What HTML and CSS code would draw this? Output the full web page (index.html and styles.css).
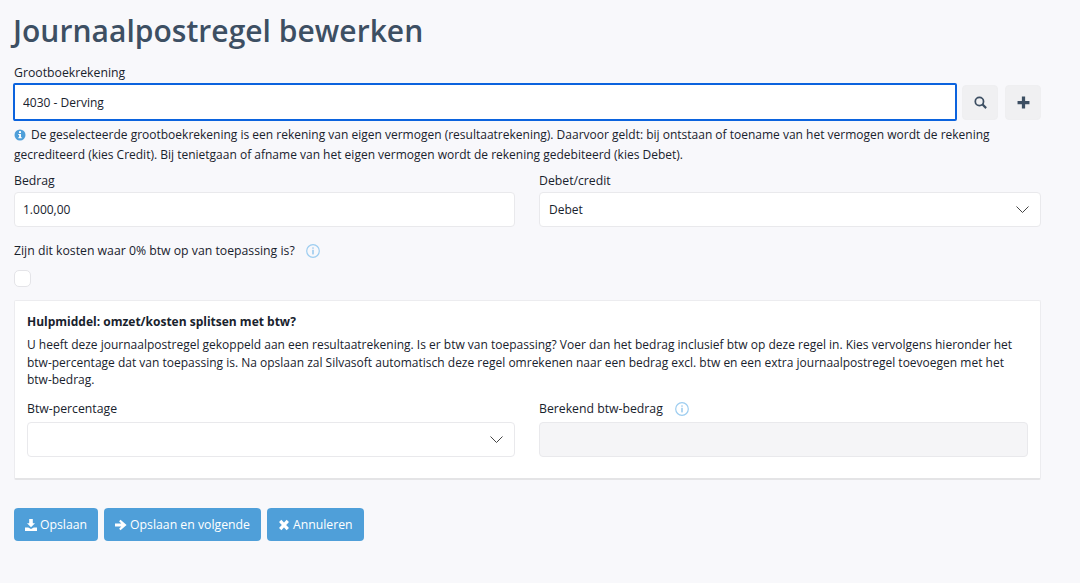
FILE: index.html
```html
<!DOCTYPE html>
<html lang="nl">
<head>
<meta charset="utf-8">
<title>Journaalpostregel bewerken</title>
<link rel="stylesheet" href="styles.css">
</head>
<body>
<main class="page">
  <h1 class="title">Journaalpostregel bewerken</h1>

  <label class="label label-account">Grootboekrekening</label>
  <div class="account-row">
    <input class="control control-focus" type="text" value="4030 - Derving">
    <button class="icon-btn" type="button" aria-label="Zoeken">
      <svg width="13" height="13" viewBox="0 0 12 12"><circle cx="5" cy="5" r="3.8" fill="none" stroke="#3d4f63" stroke-width="1.6"/><path d="M7.7 7.7 11.2 11.2" stroke="#3d4f63" stroke-width="2" fill="none"/></svg>
    </button>
    <button class="icon-btn" type="button" aria-label="Toevoegen">
      <svg width="13" height="13" viewBox="0 0 12 12"><path d="M6 .5v11M.5 6h11" stroke="#3d4f63" stroke-width="3" fill="none"/></svg>
    </button>
  </div>
  <p class="help">
    <svg class="help-icon" width="12" height="12" viewBox="0 0 12 12"><circle cx="6" cy="6" r="5.5" fill="#4f9fd9"/><rect x="5" y="2.2" width="2" height="1.8" fill="#fff"/><path d="M4.3 5h2.7v3.3h.8v1H4.3v-1h.8V6h-.8z" fill="#fff"/></svg>De geselecteerde grootboekrekening is een rekening van eigen vermogen (resultaatrekening). Daarvoor geldt: bij ontstaan of toename van het vermogen wordt de rekening gecrediteerd (kies Credit). Bij tenietgaan of afname van het eigen vermogen wordt de rekening gedebiteerd (kies Debet).
  </p>

  <div class="columns columns-amount">
    <div class="field">
      <label class="label">Bedrag</label>
      <input class="control" type="text" value="1.000,00">
    </div>
    <div class="field">
      <label class="label">Debet/credit</label>
      <div class="control select">Debet
        <svg class="chevron" width="13" height="7" viewBox="0 0 13 7"><path d="M.5.5l6 6 6-6" fill="none" stroke="#444" stroke-width="1"/></svg>
      </div>
    </div>
  </div>

  <div class="zero-label">
    <label class="label label-inline">Zijn dit kosten waar 0% btw op van toepassing is?</label>
    <svg class="info" width="14" height="14" viewBox="0 0 14 14"><circle cx="7" cy="7" r="6.3" fill="none" stroke="#9dcdf0" stroke-width="1.2"/><rect x="6.4" y="3.4" width="1.2" height="1.3" fill="#7fbbe8"/><rect x="6.4" y="5.8" width="1.2" height="4.6" fill="#7fbbe8"/></svg>
  </div>
  <div class="checkbox"></div>

  <section class="panel">
    <h2 class="panel-title">Hulpmiddel: omzet/kosten splitsen met btw?</h2>
    <p class="panel-text">U heeft deze journaalpostregel gekoppeld aan een resultaatrekening. Is er btw van toepassing? Voer dan het bedrag inclusief btw op deze regel in. Kies vervolgens hieronder het btw-percentage dat van toepassing is. Na opslaan zal Silvasoft automatisch deze regel omrekenen naar een bedrag excl. btw en een extra journaalpostregel toevoegen met het btw-bedrag.</p>
    <div class="columns">
      <div class="field">
        <label class="label">Btw-percentage</label>
        <div class="control select">
          <svg class="chevron" width="13" height="7" viewBox="0 0 13 7"><path d="M.5.5l6 6 6-6" fill="none" stroke="#444" stroke-width="1"/></svg>
        </div>
      </div>
      <div class="field">
        <div class="zero-label zero-label-tight">
          <label class="label label-inline">Berekend btw-bedrag</label>
          <svg class="info" width="14" height="14" viewBox="0 0 14 14"><circle cx="7" cy="7" r="6.3" fill="none" stroke="#9dcdf0" stroke-width="1.2"/><rect x="6.4" y="3.4" width="1.2" height="1.3" fill="#7fbbe8"/><rect x="6.4" y="5.8" width="1.2" height="4.6" fill="#7fbbe8"/></svg>
        </div>
        <div class="control control-disabled"></div>
      </div>
    </div>
  </section>

  <div class="actions">
    <button class="btn" type="button">
      <svg width="12" height="12" viewBox="0 0 12 12"><path d="M4.2 0h3.6v4.3H10L6 8.2 2 4.3h2.2zM0 8.6h3.2L6 10l2.8-1.4H12V12H0z" fill="#fff"/></svg>Opslaan</button>
    <button class="btn" type="button">
      <svg width="12" height="12" viewBox="0 0 12 12"><path d="M0 4.4h6.3L4.1 2.2 5.5.8 11.6 6 5.5 11.2 4.1 9.8l2.2-2.2H0z" fill="#fff"/></svg>Opslaan en volgende</button>
    <button class="btn" type="button">
      <svg width="12" height="12" viewBox="0 0 12 12"><path d="M2.2 1.9 9.8 10.1M9.8 1.9 2.2 10.1" stroke="#fff" stroke-width="3.2" fill="none"/></svg>Annuleren</button>
  </div>
</main>
</body>
</html>
```

FILE: styles.css
```css
* { box-sizing: border-box; }

html, body {
  margin: 0;
  background: #f8f8fb;
}

body {
  font-family: "Open Sans", "Liberation Sans", sans-serif;
  font-size: 12px;
  line-height: 21px;
  color: #18222d;
  overflow: hidden;
}

.page {
  width: 1027px;
  height: 583px;
  margin-left: 14px;
  padding-top: 10px;
}

.title {
  margin: 0 0 0 -1px;
  font-size: 30px;
  line-height: 41px;
  font-weight: 600;
  letter-spacing: .03px;
  color: #3d4f63;
}

.label {
  display: block;
  font-size: 12.25px;
  line-height: 18px;
  margin-bottom: 4px;
}

.label-account { margin-top: 13px; margin-bottom: 1px; }
.label-inline { margin-bottom: 0; }

.account-row {
  display: flex;
  align-items: center;
  margin-left: -1px;
}

.control {
  display: block;
  width: 100%;
  height: 35px;
  padding: 0 8px;
  border: 1px solid #e9e9ec;
  border-radius: 4px;
  background: #fff;
  font: inherit;
  font-size: 12px;
  line-height: 33px;
  color: #18222d;
  outline: none;
}

.control-focus {
  flex: 1;
  width: auto;
  height: 38px;
  padding: 0 8px;
  border: 2px solid #0b63de;
  border-radius: 2px;
}

.icon-btn {
  flex: none;
  display: flex;
  align-items: center;
  justify-content: center;
  width: 36px;
  height: 35px;
  margin-left: 7px;
  padding: 0;
  border: 1px solid #efeff1;
  border-radius: 4px;
  background: #f0f0f2;
}

.icon-btn:first-of-type { margin-left: 5px; }

.help {
  margin: 4px 0 0;
  line-height: 20px;
}

.help-icon {
  vertical-align: -2px;
  margin-right: 5px;
}

.columns {
  display: grid;
  grid-template-columns: calc(50% - 12.5px) 1fr;
  column-gap: 24px;
}

.columns-amount { margin-top: 7px; }
.columns-amount .label { margin-bottom: 2px; }

.select {
  position: relative;
  padding-left: 9px;
}

.chevron {
  position: absolute;
  right: 11px;
  top: 13px;
}

.zero-label {
  display: flex;
  align-items: center;
  gap: 11px;
  margin-top: 14px;
  height: 20px;
}

.zero-label-tight {
  margin-top: 0;
  height: 18px;
  margin-bottom: 4px;
  gap: 12px;
}

.checkbox {
  width: 17px;
  height: 17px;
  margin-top: 9px;
  border: 1px solid #e4e4e8;
  border-radius: 5px;
  background: #fff;
}

.panel {
  margin-top: 13px;
  height: 180px;
  padding: 12px 12px 0;
  background: #fff;
  border: 1px solid #ececef;
  border-bottom: 2px solid #e4e4e6;
  border-radius: 2px;
}

.panel-title {
  margin: 0;
  font-size: 12px;
  line-height: 18px;
  font-weight: 700;
}

.panel-text {
  margin: 5px 0 0;
  line-height: 17.5px;
}

.panel .columns { margin-top: 11px; }

.control-disabled { background: #f5f5f7; }

.actions {
  display: flex;
  gap: 6px;
  margin-top: 28px;
}

.btn {
  display: flex;
  align-items: center;
  gap: 3px;
  height: 33px;
  padding: 0 11px;
  border: 0;
  border-radius: 4px;
  background: #4f9fd9;
  color: #fff;
  font: inherit;
  font-size: 12.25px;
}
```
